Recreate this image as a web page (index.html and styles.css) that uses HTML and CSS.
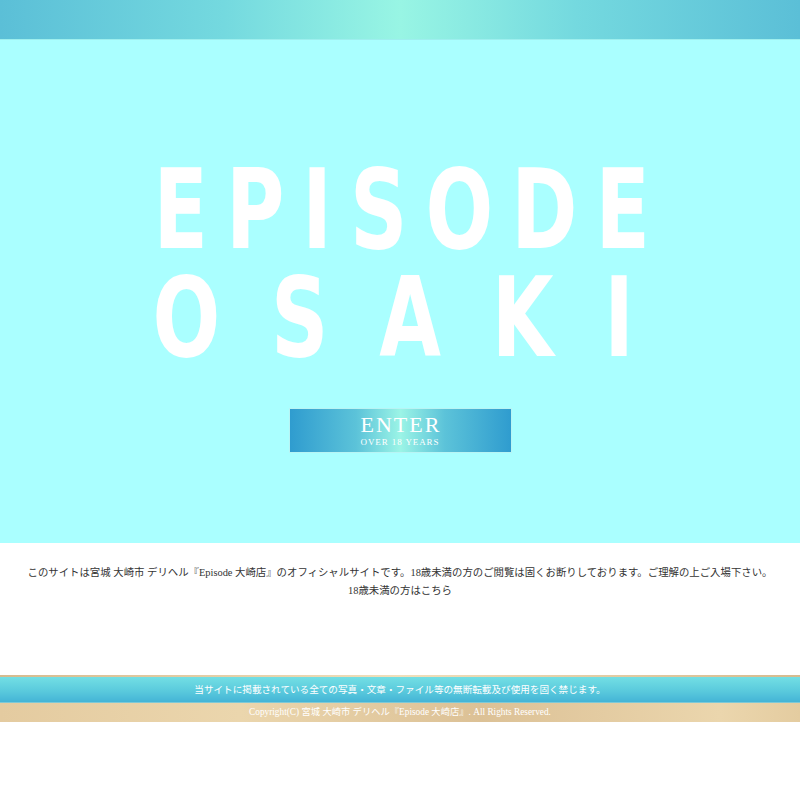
FILE: index.html
```html
<!DOCTYPE html>
<html lang="ja">
<head>
<meta charset="utf-8">
<title>Episode 大崎店</title>
<link rel="stylesheet" href="styles.css">
</head>
<body>
<header class="topbar"></header>
<main class="hero">
  <h1 class="title">
    <span class="title-line line-1">EPISODE</span>
    <span class="title-line line-2">OSAKI</span>
  </h1>
  <a class="enter" href="#">
    <span class="enter-main">ENTER</span>
    <span class="enter-sub">OVER 18 YEARS</span>
  </a>
</main>
<section class="notice">
  <p class="notice-text">このサイトは宮城 大崎市 デリヘル『Episode 大崎店』のオフィシャルサイトです。18歳未満の方のご閲覧は固くお断りしております。ご理解の上ご入場下さい。</p>
  <p class="notice-link"><a href="#">18歳未満の方はこちら</a></p>
</section>
<footer class="footer">
  <div class="footer-rule"></div>
  <div class="footer-warning">当サイトに掲載されている全ての写真・文章・ファイル等の無断転載及び使用を固く禁じます。</div>
  <div class="footer-copy">Copyright(C) 宮城 大崎市 デリヘル『Episode 大崎店』. All Rights Reserved.</div>
</footer>
</body>
</html>
```
FILE: styles.css
```css
* { box-sizing: border-box; }
html, body { margin: 0; padding: 0; background: #ffffff; }
body { font-family: "Liberation Serif", "Noto Sans CJK JP", serif; color: #333333; }

.topbar {
  height: 40px;
  background: linear-gradient(90deg, #5bbfd7 0%, #74d9df 28%, #98f5e4 50%, #74d9df 72%, #5bbfd7 100%);
  border-bottom: 1px solid #9defee;
}

.hero {
  height: 503px;
  background: #aaffff;
  display: flex;
  flex-direction: column;
  align-items: center;
  padding-top: 116px;
}

.title {
  margin: 0;
  display: flex;
  flex-direction: column;
  align-items: center;
  font-family: "DejaVu Sans Condensed", "DejaVu Sans", sans-serif;
  font-stretch: condensed;
  font-weight: bold;
  font-size: 108px;
  line-height: 108px;
  color: #ffffff;
}
.title-line {
  display: block;
  white-space: nowrap;
  transform: scale(0.82, 1.03);
}
.line-1 { letter-spacing: 22px; margin-right: -22px; }
.line-2 { letter-spacing: 62px; margin-right: -38px; }

.enter {
  margin-top: 36px;
  width: 223px;
  height: 45px;
  display: flex;
  flex-direction: column;
  align-items: center;
  justify-content: center;
  text-decoration: none;
  color: #ffffff;
  border: 1px solid #b8f4f4;
  background: linear-gradient(90deg, #2f9ccf 0%, #5cc3d9 30%, #9bf4e6 50%, #5cc3d9 70%, #2f9ccf 100%);
  font-family: "Liberation Serif", serif;
}
.enter-main {
  font-size: 22px;
  line-height: 22px;
  letter-spacing: 2px;
  margin-right: -2px;
}
.enter-sub {
  font-size: 9px;
  line-height: 11px;
  letter-spacing: 0.9px;
  margin-top: 1px;
}

.notice {
  height: 132px;
  padding-top: 21px;
  text-align: center;
  font-size: 10.4px;
  line-height: 18px;
  color: #333333;
}
.notice p { margin: 0; }
.notice a { color: #333333; text-decoration: none; }

.footer { color: #ffffff; text-align: center; }
.footer-rule {
  height: 2px;
  background: linear-gradient(90deg, #d6bb8e, #f1dfba 50%, #d6bb8e);
}
.footer-warning {
  height: 26px;
  line-height: 25px;
  font-family: "Noto Sans CJK JP", "Liberation Sans", sans-serif;
  font-size: 9.6px;
  background: linear-gradient(180deg, #73dfe4 0%, #58c8dc 60%, #44b4d6 100%);
  border-bottom: 1px solid #7fc9d6;
}
.footer-copy {
  height: 19px;
  line-height: 19px;
  font-size: 9.3px;
  background: linear-gradient(90deg, #e4cba0 0%, #ebd6ad 30%, #dcc196 60%, #ebd6ad 90%, #e4cca0 100%);
}
```
